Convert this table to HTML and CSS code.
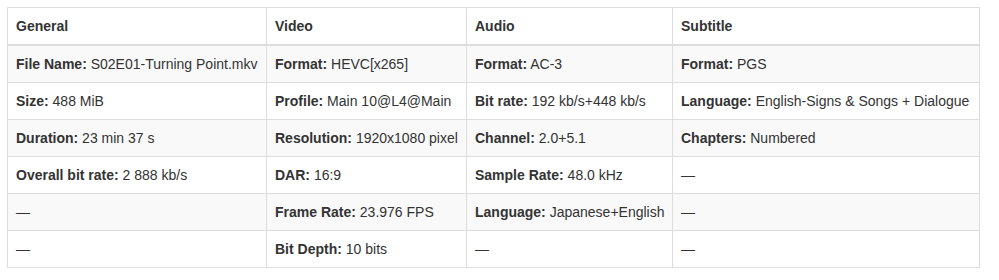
FILE: index.html
```html
<!DOCTYPE html>
<html>
<head>
<meta charset="utf-8">
<link rel="stylesheet" href="styles.css">
</head>
<body>
<table class="info">
  <colgroup>
    <col class="c1"><col class="c2"><col class="c3"><col class="c4">
  </colgroup>
  <thead>
    <tr><th>General</th><th>Video</th><th>Audio</th><th>Subtitle</th></tr>
  </thead>
  <tbody>
    <tr>
      <td><b>File Name:</b> S02E01-Turning Point.mkv</td>
      <td><b>Format:</b> HEVC[x265]</td>
      <td><b>Format:</b> AC-3</td>
      <td><b>Format:</b> PGS</td>
    </tr>
    <tr>
      <td><b>Size:</b> 488 MiB</td>
      <td><b>Profile:</b> Main 10@L4@Main</td>
      <td><b>Bit rate:</b> 192 kb/s+448 kb/s</td>
      <td><b>Language:</b> English-Signs &amp; Songs + Dialogue</td>
    </tr>
    <tr>
      <td><b>Duration:</b> 23 min 37 s</td>
      <td><b>Resolution:</b> 1920x1080 pixel</td>
      <td><b>Channel:</b> 2.0+5.1</td>
      <td><b>Chapters:</b> Numbered</td>
    </tr>
    <tr>
      <td><b>Overall bit rate:</b> 2 888 kb/s</td>
      <td><b>DAR:</b> 16:9</td>
      <td><b>Sample Rate:</b> 48.0 kHz</td>
      <td>—</td>
    </tr>
    <tr>
      <td>—</td>
      <td><b>Frame Rate:</b> 23.976 FPS</td>
      <td><b>Language:</b> Japanese+English</td>
      <td>—</td>
    </tr>
    <tr>
      <td>—</td>
      <td><b>Bit Depth:</b> 10 bits</td>
      <td>—</td>
      <td>—</td>
    </tr>
  </tbody>
</table>
</body>
</html>
```
FILE: styles.css
```css
html, body {
  margin: 0;
  padding: 0;
  background: #fff;
}
body {
  padding: 7px;
  font-family: "Liberation Sans", Arial, Helvetica, sans-serif;
  font-size: 14px;
  line-height: 20px;
  color: #333;
}
.info {
  border-collapse: collapse;
  border-spacing: 0;
  table-layout: fixed;
  width: 972px;
  border: 1px solid #ddd;
}
.c1 { width: 259px; }
.c2 { width: 200px; }
.c3 { width: 206px; }
.c4 { width: 307px; }
.info th,
.info td {
  border: 1px solid #ddd;
  padding: 8px;
  text-align: left;
  vertical-align: top;
  white-space: nowrap;
}
.info th {
  font-weight: bold;
  border-bottom: 2px solid #ddd;
}
.info b {
  font-weight: bold;
}
.info tbody tr:nth-child(odd) {
  background: #f9f9f9;
}
```
